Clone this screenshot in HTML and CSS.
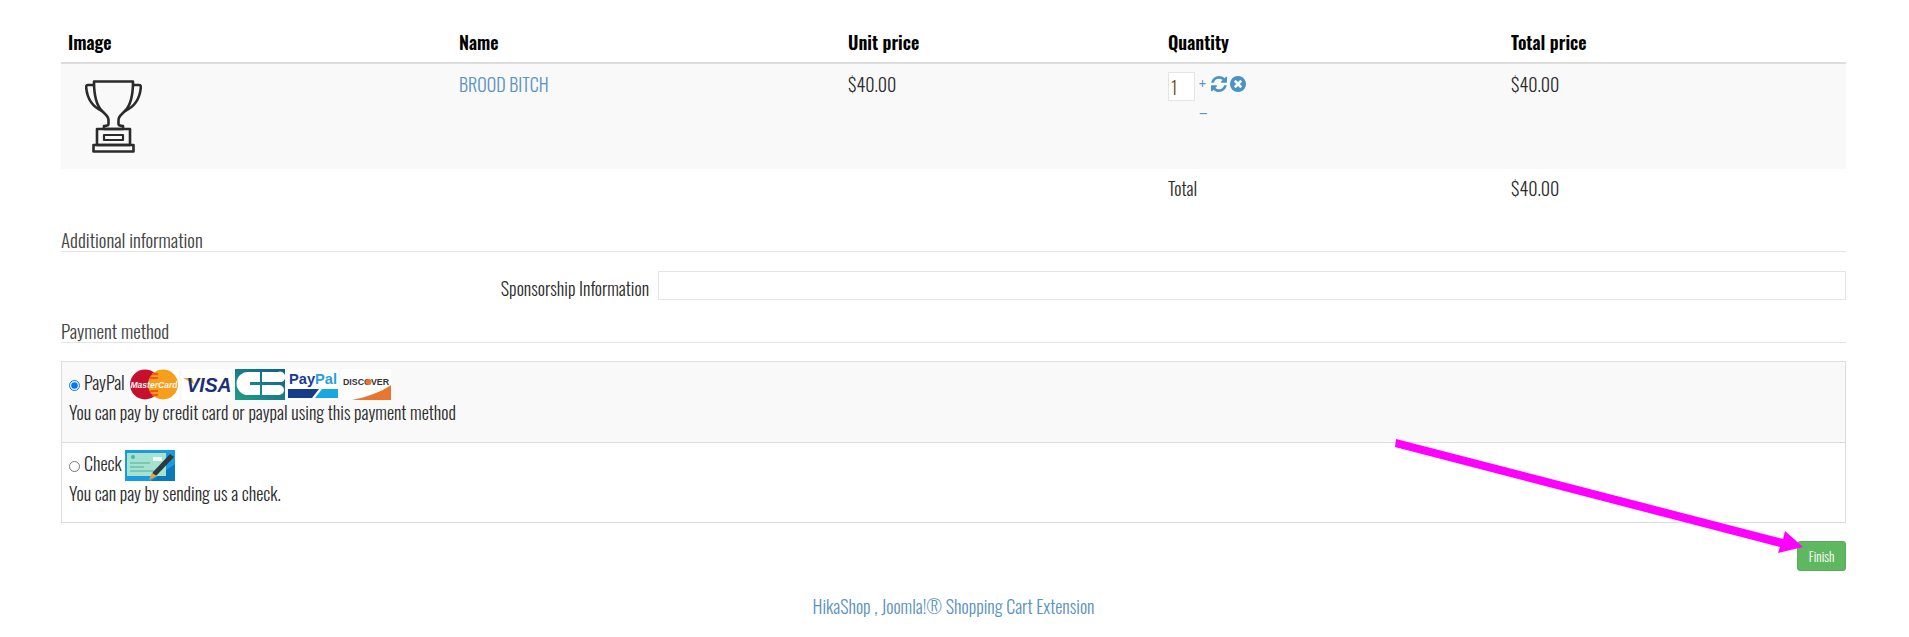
FILE: index.html
```html
<!DOCTYPE html>
<html lang="en">
<head>
  <title>Checkout</title>
  <link rel="stylesheet" href="styles.css">
</head>
<body>

  <div class="checkout">
    <table class="cart">
      <thead>
        <tr>
          <th class="col-image">Image</th>
          <th class="col-name">Name</th>
          <th class="col-unit">Unit price</th>
          <th class="col-qty">Quantity</th>
          <th>Total price</th>
        </tr>
      </thead>
      <tbody>
        <tr class="item">
          <td>
            <svg class="trophy" viewBox="0 0 57 73" fill="none" stroke="#2b2b2b" stroke-width="2.6" stroke-linejoin="round">
              <path d="M9 1.500H48C48 15 46 25 40 31 36 35 33.500 36 33.500 40V44C33.500 45 35 46 38 46V49H19V46C22 46 23.500 45 23.500 44V40C23.500 36 21 35 17 31 11 25 9 15 9 1.500Z"/>
              <path d="M9 5H3C1.500 5 1 6 1.200 7.500 2 17 6 26 17 31M48 5H54C55.500 5 56 6 55.800 7.500 55 17 51 26 40 31"/>
              <path d="M12 49H45V65H12Z"/>
              <path d="M19 55H38V60H19Z" stroke-width="2.200"/>
              <path d="M8.500 65H48.500V71.500H8.500Z"/>
            </svg>
          </td>
          <td><a class="link" href="#">BROOD BITCH</a></td>
          <td>$40.00</td>
          <td>
            <div class="qty">
              <input class="qty-input" type="text" value="1">
              <div class="qty-steps">
                <a href="#">+</a>
                <a href="#">–</a>
              </div>
              <svg class="qty-icon" viewBox="128 128 1536 1536"><path d="M1639 1056q0 5-1 7-64 268-268 434.5t-478 166.5q-146 0-282.5-55t-243.5-157l-129 129q-19 19-45 19t-45-19-19-45v-448q0-26 19-45t45-19h448q26 0 45 19t19 45-19 45l-137 137q71 66 161 102t187 36q134 0 250-65t186-179q11-17 53-117 8-23 30-23h192q13 0 22.5 9.5t9.5 22.5zm25-800v448q0 26-19 45t-45 19h-448q-26 0-45-19t-19-45 19-45l138-138q-148-137-349-137-134 0-250 65t-186 179q-11 17-53 117-8 23-30 23h-199q-13 0-22.5-9.5t-9.5-22.5v-7q65-268 270-434.5t480-166.5q146 0 284 55.5t245 156.5l130-129q19-19 45-19t45 19 19 45z"/></svg>
              <svg class="qty-icon" viewBox="128 128 1536 1536"><path d="M1277 1122q0-26-19-45l-181-181 181-181q19-19 19-45 0-27-19-46l-90-90q-19-19-46-19-26 0-45 19l-181 181-181-181q-19-19-45-19-27 0-46 19l-90 90q-19 19-19 46 0 26 19 45l181 181-181 181q-19 19-19 45 0 27 19 46l90 90q19 19 46 19 26 0 45-19l181-181 181 181q19 19 45 19 27 0 46-19l90-90q19-19 19-46zm387-226q0 209-103 385.5t-279.5 279.5-385.5 103-385.5-103-279.5-279.5-103-385.5 103-385.5 279.5-279.5 385.5-103 385.5 103 279.5 279.5 103 385.5z"/></svg>
            </div>
          </td>
          <td>$40.00</td>
        </tr>
        <tr class="sum">
          <td colspan="3"></td>
          <td>Total</td>
          <td>$40.00</td>
        </tr>
      </tbody>
    </table>

    <h3 class="legend legend-first">Additional information</h3>
    <div class="field">
      <label class="field-label" for="sponsor">Sponsorship Information</label>
      <input class="field-input" id="sponsor" type="text">
    </div>

    <h3 class="legend">Payment method</h3>
    <div class="payment">
      <div class="pay-row pay-row-alt">
        <div class="pay-title">
          <input class="pay-radio" type="radio" name="pay" checked>
          <span class="pay-name">PayPal</span>
          <span class="cards">
            <svg class="card" viewBox="0 0 50 31">
              <rect width="50" height="31" fill="#fff"/>
              <circle cx="16" cy="15.500" r="15" fill="#c8102e"/>
              <circle cx="34" cy="15.500" r="15" fill="#f79e1b"/>
              <path d="M23 5h6M21 9h8M21 22h8M23 26h6" stroke="#f0590f" stroke-width="2"/>
              <text class="card-mc" x="25" y="19" text-anchor="middle" textLength="47" lengthAdjust="spacingAndGlyphs">MasterCard</text>
            </svg>
            <svg class="card" viewBox="0 0 50 31">
              <rect width="50" height="31" fill="#fff"/>
              <path d="M1 9h9l2 6z" fill="#e8a33d"/>
              <text class="card-visa" x="27" y="23" text-anchor="middle" textLength="45" lengthAdjust="spacingAndGlyphs">VISA</text>
            </svg>
            <svg class="card" viewBox="0 0 50 31">
              <defs>
                <linearGradient id="cb" x1="0" y1="1" x2="1" y2="0">
                  <stop offset="0" stop-color="#1f9d83"/>
                  <stop offset="1" stop-color="#0f5f8c"/>
                </linearGradient>
              </defs>
              <rect width="50" height="31" fill="url(#cb)"/>
              <path d="M25 3H13a11.500 11.500 0 0 0 0 23H25V16H15V13H25Z" fill="#fff"/>
              <path d="M27 3H43a5 5 0 0 1 4 10H27ZM27 16H44a5 5 0 0 1 0 10H27Z" fill="#fff"/>
            </svg>
            <svg class="card" viewBox="0 0 50 31">
              <rect width="50" height="31" fill="#fff"/>
              <text class="card-pp" x="1" y="15" textLength="48" lengthAdjust="spacingAndGlyphs"><tspan fill="#1a3a8f">Pay</tspan><tspan fill="#2a9fd8">Pal</tspan></text>
              <path d="M0 20h31l-7 9H0z" fill="#133c8b"/>
              <path d="M34 20h16v9H27z" fill="#19a7e0"/>
            </svg>
            <svg class="card" viewBox="0 0 50 31">
              <rect width="50" height="31" fill="#fff"/>
              <path d="M11 31C26 28 40 23 50 16v15z" fill="#e87530"/>
              <text class="card-disc" x="2" y="16" textLength="46" lengthAdjust="spacingAndGlyphs">DISCOVER</text>
              <circle cx="27.500" cy="13" r="3" fill="#e87530"/>
            </svg>
          </span>
        </div>
        <div class="pay-desc">You can pay by credit card or paypal using this payment method</div>
      </div>
      <div class="pay-row">
        <div class="pay-title">
          <input class="pay-radio" type="radio" name="pay">
          <span class="pay-name">Check</span>
          <svg class="card" viewBox="0 0 50 31">
            <rect width="50" height="31" fill="#1a9ae0"/>
            <path d="M26 31 50 14v17z" fill="#0c78b8"/>
            <rect x="2" y="3" width="39" height="23" fill="#a5e3d0"/>
            <circle cx="8" cy="7" r="2" fill="#4eb39a"/>
            <rect x="28" y="7" width="9" height="4" fill="#eafaf6"/>
            <path d="M5 13h20M5 17h14M5 21h24" stroke="#6fbfae" stroke-width="1.500"/>
            <path d="M25 29l3-7L45 4l4 3-17 18z" fill="#2f3a40"/>
            <path d="M24 30l3-7 5 3z" fill="#e8a33d"/>
          </svg>
        </div>
        <div class="pay-desc">You can pay by sending us a check.</div>
      </div>
    </div>

    <div class="actions">
      <button class="finish" type="button">Finish</button>
    </div>

    <div class="credit"><a class="link" href="#">HikaShop , Joomla!® Shopping Cart Extension</a></div>
  </div>

  <!-- annotation drawn on top of the page -->
  <svg class="arrow" width="1909" height="637" viewBox="0 0 1909 637">
    <path d="M1396 439 1783 539 1785 531 1803 547 1778 553 1780 547 1395 447z" fill="#ff00ff"/>
  </svg>

</body>
</html>
```

FILE: styles.css
```css
* { box-sizing: border-box; margin: 0; padding: 0; }
body {
  font-family: Oswald, "Open Sans", sans-serif;
  font-weight: 300;
  font-size: 18px;
  line-height: 23px;
  color: #2b2b2b;
  background-color: #fff;
  position: relative;
}
a { text-decoration: none; }
.link { color: #5b93c0; }

.checkout { padding: 30px 63px 0 61px; }

/* cart table */
.cart { width: 100%; border-collapse: collapse; table-layout: fixed; }
.cart th {
  text-align: left; font-weight: 600; color: #000;
  padding: 1px 7px 8px 7px;
  border-bottom: 2px solid #ddd;
}
.col-image { width: 391px; }
.col-name { width: 389px; }
.col-unit { width: 320px; }
.col-qty { width: 343px; }
.cart td { padding: 9px 7px 7px; vertical-align: top; }
.item td { background-color: #f9f9f9; height: 106px; }
.sum td { padding-top: 8px; }
.trophy { display: block; width: 57px; height: 73px; margin: 7px 0 0 17px; }

.qty { display: flex; align-items: flex-start; margin-top: -2px; }
.qty-input {
  width: 27px; height: 29px;
  margin: 1px 4px 0 0; padding: 0 0 0 2px;
  border: 1px solid #e5e5e5;
  font: inherit; font-size: 18px; color: #7a4a10;
  background-color: #fff;
}
.qty-steps { display: flex; flex-direction: column; gap: 5px; width: 12px; margin-top: 1px; }
.qty-steps a { color: #5b93c0; line-height: 23px; }
.qty-icon { width: 16px; height: 16px; margin: 5px 3px 0 0; fill: #4a94c5; }

/* sections */
.legend {
  font-weight: 300; font-size: 19px; color: #444;
  border-bottom: 1px solid #e5e5e5;
  margin-top: 16px;
  height: 24px;
}
.legend-first { margin-top: 21px; }
.field { display: flex; justify-content: flex-end; align-items: center; margin: 18px 0 19px; gap: 9px; }
.field-label { margin-top: 7px; }
.field-input { width: 1188px; height: 29px; border: 1px solid #e5e5e5; background-color: #fff; }

/* payment methods */
.payment { border: 1px solid #ddd; margin-top: 18px; }
.pay-row { padding: 6px 7px 0; height: 80px; }
.pay-row + .pay-row { border-top: 1px solid #ddd; }
.pay-row-alt { background-color: #f9f9f9; }
.pay-title { display: flex; align-items: center; height: 33px; }
.pay-radio { width: 11px; height: 11px; margin: 1px 4px 0 0; }
.pay-name { margin-bottom: 4px; }
.cards { display: flex; gap: 3px; margin-left: 4px; }
.pay-title > .card { margin-left: 3px; }
.card { display: block; width: 50px; height: 31px; flex: none; }
.card-mc { font: italic bold 9px "Liberation Sans", sans-serif; fill: #f5f5f5; }
.card-visa { font: italic bold 20px "Liberation Sans", sans-serif; fill: #1a2f75; }
.card-pp { font: bold 14px "Liberation Sans", sans-serif; }
.card-disc { font: bold 9px "Liberation Sans", sans-serif; fill: #333; }

.actions { display: flex; justify-content: flex-end; margin-top: 18px; }
.finish {
  width: 49px; height: 30px;
  font: inherit; font-size: 13px; color: #fff;
  background-color: #5fb760;
  border: 1px solid #5cab5d;
  border-radius: 3px;
}
.credit { text-align: center; margin-top: 24px; padding-bottom: 18px; }

.arrow { position: absolute; left: 0; top: 0; pointer-events: none; }
```
